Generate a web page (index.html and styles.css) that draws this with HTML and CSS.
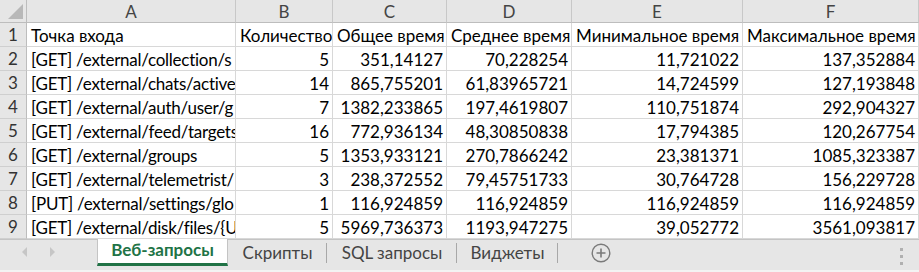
FILE: index.html
```html
<!DOCTYPE html>
<html lang="ru">
<head>
<meta charset="utf-8">
<title>Sheet</title>
<link rel="stylesheet" href="styles.css">
</head>
<body>
<div class="app">
  <div class="sheet">
    <div class="corner"><span class="tri"></span></div>
    <div class="colhead">A</div>
    <div class="colhead">B</div>
    <div class="colhead">C</div>
    <div class="colhead">D</div>
    <div class="colhead">E</div>
    <div class="colhead">F</div>

    <div class="rowhead">1</div>
    <div class="cell">Точка входа</div>
    <div class="cell">Количество</div>
    <div class="cell">Общее время</div>
    <div class="cell">Среднее время</div>
    <div class="cell">Минимальное время</div>
    <div class="cell">Максимальное время</div>

    <div class="rowhead">2</div>
    <div class="cell path">[GET] /external/collection/s</div>
    <div class="cell num">5</div>
    <div class="cell num">351,14127</div>
    <div class="cell num">70,228254</div>
    <div class="cell num">11,721022</div>
    <div class="cell num">137,352884</div>

    <div class="rowhead">3</div>
    <div class="cell path">[GET] /external/chats/active</div>
    <div class="cell num">14</div>
    <div class="cell num">865,755201</div>
    <div class="cell num">61,83965721</div>
    <div class="cell num">14,724599</div>
    <div class="cell num">127,193848</div>

    <div class="rowhead">4</div>
    <div class="cell path">[GET] /external/auth/user/g</div>
    <div class="cell num">7</div>
    <div class="cell num">1382,233865</div>
    <div class="cell num">197,4619807</div>
    <div class="cell num">110,751874</div>
    <div class="cell num">292,904327</div>

    <div class="rowhead">5</div>
    <div class="cell path">[GET] /external/feed/targets</div>
    <div class="cell num">16</div>
    <div class="cell num">772,936134</div>
    <div class="cell num">48,30850838</div>
    <div class="cell num">17,794385</div>
    <div class="cell num">120,267754</div>

    <div class="rowhead">6</div>
    <div class="cell path">[GET] /external/groups</div>
    <div class="cell num">5</div>
    <div class="cell num">1353,933121</div>
    <div class="cell num">270,7866242</div>
    <div class="cell num">23,381371</div>
    <div class="cell num">1085,323387</div>

    <div class="rowhead">7</div>
    <div class="cell path">[GET] /external/telemetrist/</div>
    <div class="cell num">3</div>
    <div class="cell num">238,372552</div>
    <div class="cell num">79,45751733</div>
    <div class="cell num">30,764728</div>
    <div class="cell num">156,229728</div>

    <div class="rowhead">8</div>
    <div class="cell path">[PUT] /external/settings/glo</div>
    <div class="cell num">1</div>
    <div class="cell num">116,924859</div>
    <div class="cell num">116,924859</div>
    <div class="cell num">116,924859</div>
    <div class="cell num">116,924859</div>

    <div class="rowhead">9</div>
    <div class="cell path">[GET] /external/disk/files/{U</div>
    <div class="cell num">5</div>
    <div class="cell num">5969,736373</div>
    <div class="cell num">1193,947275</div>
    <div class="cell num">39,052772</div>
    <div class="cell num">3561,093817</div>
  </div>

  <div class="tabbar">
    <div class="nav">
      <span class="arrow left"></span>
      <span class="arrow right"></span>
    </div>
    <div class="tab active">Веб-запросы</div>
    <div class="tab">Скрипты</div>
    <div class="tab">SQL запросы</div>
    <div class="tab">Виджеты</div>
    <div class="add">
      <svg width="20" height="20" viewBox="0 0 20 20">
        <circle cx="10" cy="10" r="8.8" fill="none" stroke="#7a7a7a" stroke-width="1.4"/>
        <path d="M10 5.5v9M5.5 10h9" stroke="#7a7a7a" stroke-width="1.6"/>
      </svg>
    </div>
    <div class="spacer"></div>
    <div class="dots"><span></span><span></span><span></span></div>
  </div>
</div>
</body>
</html>
```

FILE: styles.css
```css
html, body {
  margin: 0;
  padding: 0;
  background: #ffffff;
}

.app {
  width: 919px;
  height: 272px;
  overflow: hidden;
  font-family: "Lato", "Liberation Sans", sans-serif;
  font-size: 17px;
  color: #000;
}

.sheet {
  display: grid;
  grid-template-columns: 27px 209px 97px 114px 125px 171px 176px;
  grid-template-rows: 23px repeat(9, 24px);
  height: 240px;
  box-sizing: border-box;
  border-bottom: 1px solid #c4c4c4;
}

.corner {
  background: #e6e6e6;
  border-right: 1px solid #bdbdbd;
  border-bottom: 1px solid #bdbdbd;
  box-sizing: border-box;
  position: relative;
}

.tri {
  position: absolute;
  right: 3px;
  bottom: 3px;
  width: 0;
  height: 0;
  border-left: 15px solid transparent;
  border-bottom: 15px solid #b8b8b8;
}

.colhead {
  background: #e6e6e6;
  border-right: 1px solid #c8c8c8;
  border-bottom: 1px solid #bdbdbd;
  box-sizing: border-box;
  display: flex;
  align-items: center;
  justify-content: center;
  color: #444;
  font-size: 17px;
  padding-top: 1px;
}

.rowhead {
  background: #e6e6e6;
  border-right: 1px solid #bdbdbd;
  border-bottom: 1px solid #cfcfcf;
  box-sizing: border-box;
  display: flex;
  align-items: center;
  justify-content: center;
  color: #333;
  font-size: 17px;
}

.cell {
  border-right: 1px solid #d8d8d8;
  border-bottom: 1px solid #d8d8d8;
  box-sizing: border-box;
  padding: 0 3px 0 4px;
  display: flex;
  align-items: center;
  white-space: nowrap;
  overflow: hidden;
  line-height: 1;
  padding-top: 2px;
}

.cell.path {
  letter-spacing: -0.25px;
  padding-left: 4px;
  padding-right: 0;
}

.cell.num {
  justify-content: flex-end;
  padding-right: 3px;
}

.tabbar {
  display: flex;
  align-items: stretch;
  height: 32px;
  background: #e6e6e6;
  box-sizing: border-box;
  border-bottom: 2px solid #f3f3f3;
}

.nav {
  width: 97px;
  display: flex;
  align-items: center;
  gap: 22px;
  padding-left: 22px;
  box-sizing: border-box;
  padding-bottom: 6px;
}

.arrow {
  width: 0;
  height: 0;
  border-top: 5px solid transparent;
  border-bottom: 5px solid transparent;
}
.arrow.left { border-right: 5px solid #c6c6c6; }
.arrow.right { border-left: 5px solid #c6c6c6; margin-left: 1px; }

.tab {
  display: flex;
  align-items: center;
  justify-content: center;
  color: #444;
  font-size: 17px;
  padding-bottom: 6px;
  position: relative;
}

.tab:nth-child(3) { width: 99px; }
.tab:nth-child(4) { width: 130px; }
.tab:nth-child(5) { width: 101px; }

.tab:nth-child(3)::after,
.tab:nth-child(4)::after,
.tab:nth-child(5)::after {
  content: "";
  position: absolute;
  right: 0;
  top: 3px;
  height: 20px;
  border-right: 1px solid #a8a8a8;
}

.tab.active {
  width: 131px;
  background: #ffffff;
  color: #217346;
  font-weight: bold;
  box-sizing: border-box;
  border-left: 1px solid #c4c4c4;
  border-right: 1px solid #c4c4c4;
  margin-top: -1px;
  margin-bottom: 4px;
  padding-bottom: 3px;
  border-bottom: 3px solid #217346;
}

.add {
  width: 86px;
  display: flex;
  align-items: center;
  justify-content: center;
  padding-bottom: 4px;
}

.spacer { flex: 1; }

.dots {
  width: 36px;
  display: flex;
  flex-direction: column;
  align-items: center;
  justify-content: flex-start;
  gap: 4px;
  padding-top: 8px;
  box-sizing: border-box;
}
.dots span {
  width: 3px;
  height: 3px;
  background: #b0b0b0;
}
```
